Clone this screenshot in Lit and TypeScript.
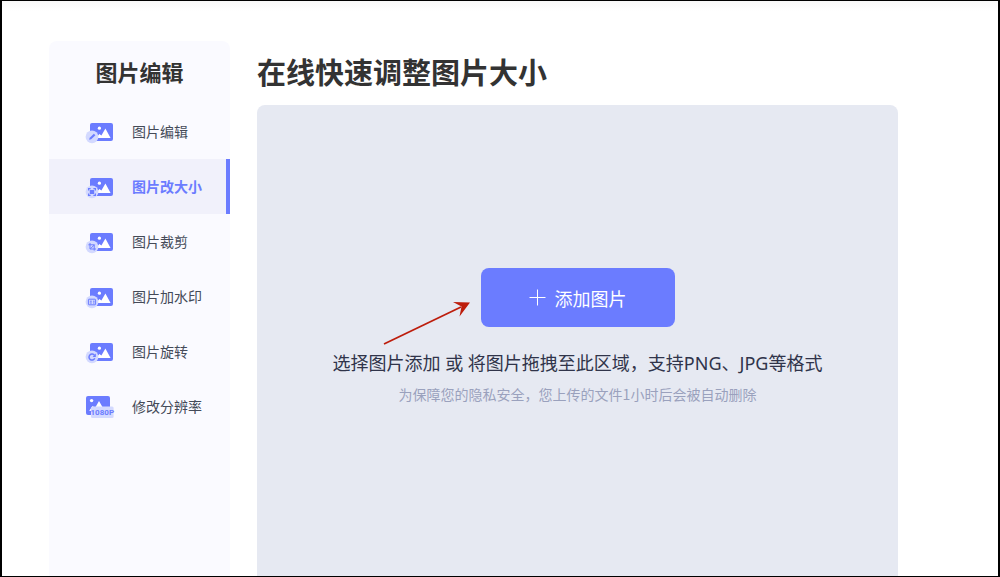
import { LitElement, html, css, svg } from "lit";
import { customElement, property } from "lit/decorators.js";

type IconName = "edit" | "resize" | "crop" | "watermark" | "rotate" | "resolution";

interface Tool {
  icon: IconName;
  label: string;
}

const TOOLS: Tool[] = [
  { icon: "edit", label: "图片编辑" },
  { icon: "resize", label: "图片改大小" },
  { icon: "crop", label: "图片裁剪" },
  { icon: "watermark", label: "图片加水印" },
  { icon: "rotate", label: "图片旋转" },
  { icon: "resolution", label: "修改分辨率" },
];

// Small symbols drawn inside the round badge, centred on (6, 15)
const BADGES: Record<string, unknown> = {
  edit: svg`<path d="M3.2 17.8l.5-2 4.2-4.1 1.5 1.5-4.2 4.1z" fill="#6b7cff"/>`,
  resize: svg`<path d="M2.6 13.6v-2h2M7.4 11.6h2v2M9.4 16.4v2h-2M4.6 18.4h-2v-2" fill="none" stroke="#6b7cff" stroke-width="1.2"/>
    <rect x="3.8" y="12.9" width="4.4" height="4.2" rx=".6" fill="#6b7cff"/>`,
  crop: svg`<path d="M4 11v6h6M2.4 12.8h5.8v5.8M4.4 16.8l4.2-4.2" fill="none" stroke="#6b7cff" stroke-width="1"/>`,
  watermark: svg`<rect x="2.4" y="12.2" width="7.2" height="5.6" rx=".6" fill="none" stroke="#6b7cff" stroke-width="1"/>
    <path d="M3.8 14.2h2M3.8 16h2M7 14.2h1.6M7 16h1.6" stroke="#6b7cff" stroke-width="1"/>`,
  rotate: svg`<path d="M8.5 13.4A3 3 0 1 0 8.8 16.2" fill="none" stroke="#6b7cff" stroke-width="1.5"/>
    <path d="M9.8 11.6v3.4H6.6z" fill="#6b7cff"/>`,
};

@customElement("tool-icon")
export class ToolIcon extends LitElement {
  @property() name: IconName = "edit";

  static styles = css`
    :host {
      display: block;
      width: 28px;
      height: 22px;
    }
    .icon {
      display: block;
      overflow: visible;
    }
    .resolution {
      font: 700 8px Roboto, sans-serif;
    }
  `;

  render() {
    if (this.name === "resolution") {
      return html`<svg class="icon" width="28" height="22" viewBox="0 0 28 22" aria-hidden="true">
        <rect x="0" y="0" width="24" height="19" rx="2" fill="#6b7cff" />
        <circle cx="5.6" cy="4.6" r="1.7" fill="#fff" />
        <path d="M3 15l3.6-5 2.4 2L13 5l5.2 9z" fill="#fff" />
        <rect x="5" y="10.4" width="22.6" height="11.6" rx="1.5" fill="#d3d9ff" />
        <text class="resolution" x="16.3" y="19.2" text-anchor="middle" fill="#6b7cff">1080P</text>
      </svg>`;
    }
    return html`<svg class="icon" width="28" height="22" viewBox="0 -1 28 22" aria-hidden="true">
      <rect x="4" y="1" width="23" height="18" rx="2" fill="#6b7cff" />
      <circle cx="13.4" cy="6.2" r="1.6" fill="#fff" />
      <path d="M10 16l3.4-4 2 1.4 4-7 5.2 9.6z" fill="#fff" />
      <circle cx="6" cy="14.8" r="6.4" fill="#d3d9ff" />
      ${BADGES[this.name]}
    </svg>`;
  }
}

@customElement("app-root")
export class AppRoot extends LitElement {
  @property({ type: Number }) active = 1;

  static styles = css`
    :host {
      display: flex;
      box-sizing: border-box;
      height: 100vh;
      overflow: hidden;
      border: solid #000;
      border-width: 1px 2px;
      padding: 40px 100px 0 47px;
      gap: 27px;
      background: linear-gradient(#f8f8f8, #fff 10px);
      font-family: "Noto Sans CJK SC", sans-serif;
      color: #333;
    }
    .sidebar {
      flex: 0 0 181px;
      border-radius: 8px 8px 0 0;
      background: #fafaff;
    }
    .heading {
      margin: 0;
      padding: 14px 0 16px;
      font-size: 22px;
      line-height: 33px;
      font-weight: 700;
      text-align: center;
    }
    .tool {
      display: flex;
      align-items: center;
      box-sizing: border-box;
      height: 55px;
      padding-left: 37px;
      gap: 18px;
      border-right: 4px solid transparent;
      font-size: 14px;
      line-height: 20px;
      color: #444a58;
      text-decoration: none;
      white-space: nowrap;
    }
    .label {
      padding-bottom: 2px;
    }
    .tool.active {
      background: #f1f1fb;
      border-right-color: #6b7cff;
      color: #6b7cff;
      font-weight: 700;
    }
    .content {
      flex: 1;
      display: flex;
      flex-direction: column;
      min-width: 0;
    }
    .title {
      margin: 0;
      padding: 8px 0 12px;
      font-size: 29px;
      line-height: 44px;
      font-weight: 700;
    }
    .dropzone {
      flex: 1;
      display: flex;
      flex-direction: column;
      align-items: center;
      padding-top: 163px;
      border-radius: 8px 8px 0 0;
      background: #e6e9f2;
      text-align: center;
    }
    .action {
      position: relative;
    }
    .add {
      display: flex;
      align-items: center;
      justify-content: center;
      gap: 9px;
      width: 194px;
      height: 59px;
      padding: 0;
      border: 0;
      border-radius: 8px;
      background: #6b7cff;
      color: #fff;
      font-family: inherit;
      font-size: 18px;
      line-height: 26px;
      cursor: pointer;
    }
    .pointer {
      position: absolute;
      right: 100%;
      top: 30px;
      margin-right: 10px;
      pointer-events: none;
    }
    .hint {
      margin: 22px 0 0;
      font-size: 18px;
      line-height: 28px;
      color: #30344a;
      font-family: "Noto Sans", "Noto Sans CJK SC", sans-serif;
    }
    .note {
      margin: 7px 0 0;
      font-size: 14px;
      line-height: 20px;
      color: #9aa1bd;
    }
  `;

  private select(event: Event, index: number) {
    event.preventDefault();
    this.active = index;
  }

  render() {
    return html`
      <nav class="sidebar" aria-labelledby="tools-heading">
        <h2 class="heading" id="tools-heading">图片编辑</h2>
        ${TOOLS.map(
          (tool, index) => html`<a
            class="tool ${index === this.active ? "active" : ""}"
            href="#${tool.icon}"
            @click=${(event: Event) => this.select(event, index)}
          >
            <tool-icon name=${tool.icon}></tool-icon>
            <span class="label">${tool.label}</span>
          </a>`,
        )}
      </nav>
      <main class="content">
        <h1 class="title">在线快速调整图片大小</h1>
        <section class="dropzone">
          <div class="action">
            <button class="add" type="button">
              <svg width="17" height="17" viewBox="0 0 17 17" aria-hidden="true">
                <path d="M8.5 0.5v16M0.5 8.5h16" stroke="#fff" stroke-width="1" />
              </svg>
              添加图片
            </button>
            <svg class="pointer" width="88" height="48" viewBox="0 0 88 48" aria-hidden="true">
              <path d="M1 46L78 9" stroke="#bd1d0c" stroke-width="1.8" fill="none" />
              <path d="M87 4.4L70 4L78.5 8.6L76.5 18.4z" fill="#bd1d0c" />
            </svg>
          </div>
          <p class="hint">选择图片添加 或 将图片拖拽至此区域，支持PNG、JPG等格式</p>
          <p class="note">为保障您的隐私安全，您上传的文件1小时后会被自动删除</p>
        </section>
      </main>
    `;
  }
}
